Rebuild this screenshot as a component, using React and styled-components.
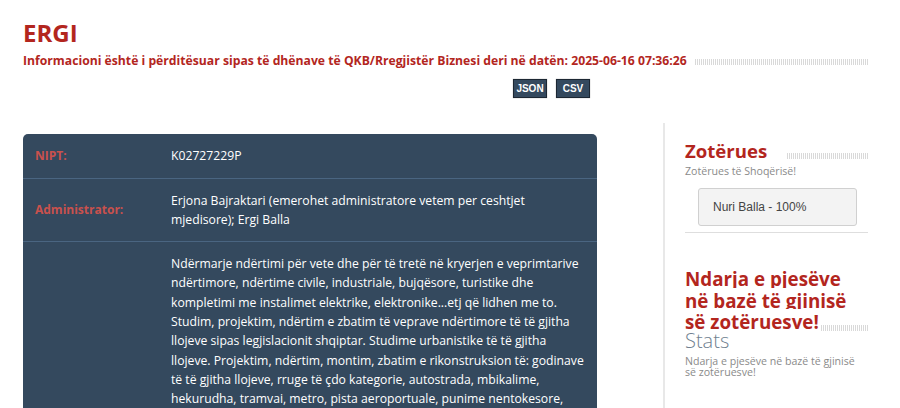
import React from "react";
import styled, { createGlobalStyle } from "styled-components";

const GlobalStyle = createGlobalStyle`
  html, body { margin: 0; padding: 0; background: #fff; }
  body { font-family: "Open Sans", "Noto Sans", sans-serif; color: #333; }
  * { box-sizing: border-box; }
`;

const stripes = `repeating-linear-gradient(90deg, #d9d9d9 0 1px, #ffffff 1px 2px)`;

const Page = styled.div`
  width: 900px;
  padding: 20px 32px 0 23px;
`;

const Title = styled.h1`
  margin: 0;
  font-size: 24px;
  line-height: 26px;
  font-weight: 700;
  color: #b3261e;
`;

/* heading whose last line is followed by a striped rule */
const LinedHeading = styled.div`
  margin: ${(p) => p.$margin || "0"};
  font-size: ${(p) => p.$size}px;
  line-height: ${(p) => p.$lh}px;
  font-weight: 700;
  color: #b3261e;
  background-image: ${stripes};
  background-repeat: no-repeat;
  background-size: 100% 6px;
  background-position: 0 calc(100% - ${(p) => p.$offset}px);
`;

const HeadingText = styled.span`
  background: #fff;
  padding-right: ${(p) => p.$gap}px;
`;

const Exports = styled.div`
  display: flex;
  gap: 9px;
  margin: 9px 0 0 490px;
`;

const ExportButton = styled.span`
  display: inline-flex;
  align-items: center;
  justify-content: center;
  width: 34px;
  height: 19px;
  background: #34495e;
  border: 1px solid #1c2733;
  box-shadow: 0 0 1px rgba(0, 0, 0, 0.4);
  color: #fff;
  font-family: "Liberation Sans", Arial, sans-serif;
  font-size: 10px;
  font-weight: 700;
`;

const Columns = styled.div`
  display: flex;
  align-items: flex-start;
  margin-top: 25px;
`;

const Main = styled.div`
  width: 574px;
  margin-top: 11px;
`;

const InfoTable = styled.div`
  background: #34495e;
  border-radius: 5px 5px 0 0;
  overflow: hidden;
`;

const Row = styled.div`
  display: flex;
  align-items: center;
  & + & { border-top: 1px solid #4a6581; }
`;

const Label = styled.div`
  width: 136px;
  padding: 12px 0 12px 12px;
  font-size: 12px;
  line-height: 19.5px;
  font-weight: 700;
  color: #c9514d;
`;

const Value = styled.div`
  flex: 1;
  padding: 12px 11.5px 12px 12px;
  font-size: 12.2px;
  line-height: 19.3px;
  color: #fff;
`;

const Sidebar = styled.aside`
  margin-left: 66px;
  border-left: 2px solid #e8e8e8;
  padding: 17px 0 40px 20px;
  width: 205px;
  min-height: 300px;
`;

const Note = styled.div`
  margin-top: ${(p) => p.$top || 0}px;
  font-size: 10.6px;
  line-height: ${(p) => p.$lh || 14}px;
  color: #8a8a8a;
  width: ${(p) => p.$width || "auto"};
`;

const OwnerBox = styled.div`
  margin: 10px 0 0 13px;
  width: 159px;
  height: 38px;
  display: flex;
  align-items: center;
  padding-left: 14px;
  background: #f3f3f3;
  border: 1px solid #d0d0d0;
  border-radius: 3px;
  font-family: "Liberation Sans", Arial, sans-serif;
  font-size: 12px;
  color: #444;
`;

const Rule = styled.hr`
  margin: 6px 0 0;
  border: 0;
  border-top: 1px solid #dedede;
`;

const Stats = styled.div`
  margin-top: -2px;
  font-size: 20px;
  line-height: 18px;
  font-weight: 300;
  color: #6f7f8f;
`;

const rows = [
  { label: "NIPT:", value: "K02727229P" },
  {
    label: "Administrator:",
    value:
      "Erjona Bajraktari (emerohet administratore vetem per ceshtjet mjedisore); Ergi Balla",
  },
  {
    label: "",
    value:
      "Ndërmarje ndërtimi për vete dhe për të tretë në kryerjen e veprimtarive ndërtimore, ndërtime civile, industriale, bujqësore, turistike dhe kompletimi me instalimet elektrike, elektronike...etj që lidhen me to. Studim, projektim, ndërtim e zbatim të veprave ndërtimore të të gjitha llojeve sipas legjislacionit shqiptar. Studime urbanistike të të gjitha llojeve. Projektim, ndërtim, montim, zbatim e rikonstruksion të: godinave të të gjitha llojeve, rruge të çdo kategorie, autostrada, mbikalime, hekurudha, tramvai, metro, pista aeroportuale, punime nentokesore, ura e vepra arti, ujësjellëse, gazsjellëse, naftësjellëse, ujëra kullimi e vaditje, hidrocentrale dhe vepra hidroteknike.",
  },
];

export default function App() {
  return (
    <>
      <GlobalStyle />
      <Page>
        <Title>ERGI</Title>
        <LinedHeading $size={12.2} $lh={18} $offset={5} $margin="6px 0 0">
          <HeadingText $gap={7}>
            Informacioni është i përditësuar sipas të dhënave të QKB/Rregjistër
            Biznesi deri në datën: 2025-06-16 07:36:26
          </HeadingText>
        </LinedHeading>
        <Exports>
          <ExportButton>JSON</ExportButton>
          <ExportButton>CSV</ExportButton>
        </Exports>
        <Columns>
          <Main>
            <InfoTable>
              {rows.map((r, i) => (
                <Row key={i}>
                  <Label>{r.label}</Label>
                  <Value>{r.value}</Value>
                </Row>
              ))}
            </InfoTable>
          </Main>
          <Sidebar>
            <LinedHeading $size={18.6} $lh={22} $offset={3}>
              <HeadingText $gap={19}>Zotërues</HeadingText>
            </LinedHeading>
            <Note $top={2}>Zotërues të Shoqërisë!</Note>
            <OwnerBox>Nuri Balla - 100%</OwnerBox>
            <Rule />
            <LinedHeading $size={18.8} $lh={21.5} $offset={3} $margin="36px 0 0">
              <HeadingText $gap={1}>
                Ndarja e pjesëve në bazë të gjinisë së zotëruesve!
              </HeadingText>
            </LinedHeading>
            <Stats>Stats</Stats>
            <Note $lh={11} $width="176px" $top={6}>
              Ndarja e pjesëve në bazë të gjinisë së zotëruesve!
            </Note>
          </Sidebar>
        </Columns>
      </Page>
    </>
  );
}
